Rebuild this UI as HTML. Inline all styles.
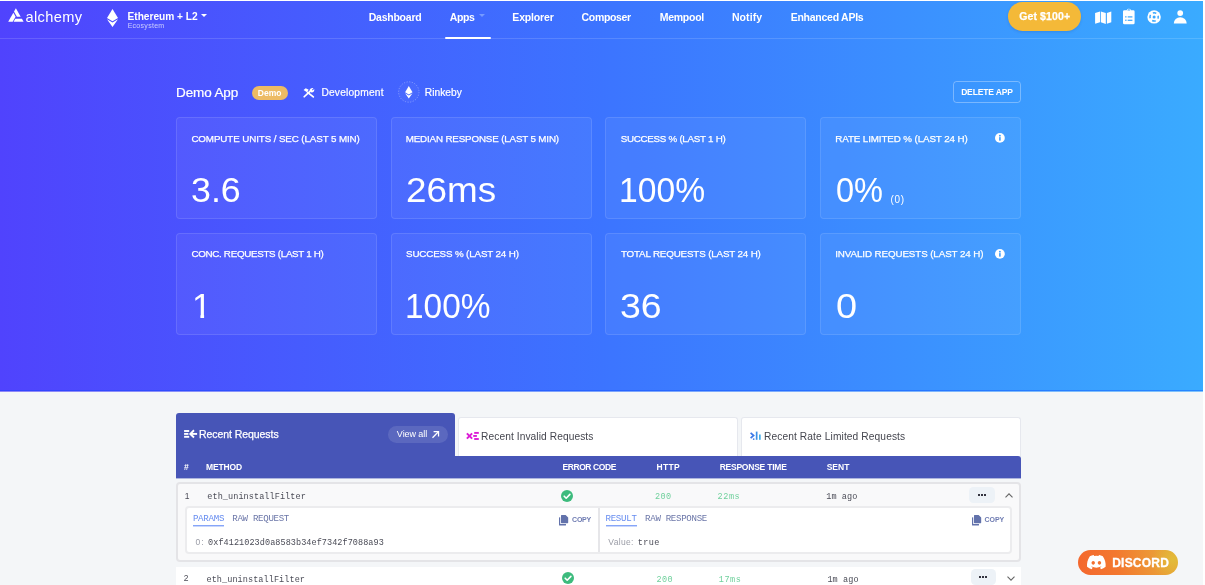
<!DOCTYPE html>
<html lang="en">
<head>
<meta charset="utf-8">
<title>Alchemy Dashboard - Demo App</title>
<style>
*{box-sizing:border-box}
html,body{margin:0;padding:0}
body{width:1205px;height:585px;overflow:hidden;background:#fff;font-family:"Liberation Sans",sans-serif;position:relative}
.page{position:absolute;left:0;top:1px;width:1203px;height:584px;background:#f4f6f8;overflow:hidden}
.hero{position:absolute;left:0;top:0;width:1203px;height:390px;background:linear-gradient(90deg,#5043fd 0%,#3c74ff 50%,#3aabff 100%);box-shadow:inset 0 -1px 0 rgba(0,70,255,.35)}
.hero2{position:absolute;left:0;top:390px;width:1203px;height:1px;opacity:.6;background:linear-gradient(90deg,#4a3cf8 0%,#2c6cff 50%,#30a0ff 100%)}
.hline{position:absolute;left:0;top:37px;width:1203px;height:1px;background:rgba(255,255,255,.14)}
.root{will-change:transform;position:absolute;left:0;top:0;width:1203px;height:585px;overflow:hidden}
.t{position:absolute;white-space:pre;display:block}
.abs{position:absolute}
.card{position:absolute;width:201px;height:102px;background:rgba(255,255,255,.05);border:1px solid rgba(255,255,255,.115);border-radius:4px}
svg{position:absolute;overflow:visible}
</style>
</head>
<body>
<div class="page"><div class="hero"></div><div class="hero2"></div><div class="hline"></div></div>
<div class="root">
<header>
<svg style="left:7.5px;top:8.3px" width="16" height="14" viewBox="0 0 16 14">
<path d="M7.9 0.3 L12.7 8.7 L8.9 8.7 L6.0 3.6 Z" fill="#fff"/>
<path d="M0.2 13.7 L5.33 4.76 L7.58 8.67 L4.7 13.7 Z" fill="#fff"/>
<path d="M7.3 10.7 L13.9 10.7 L15.6 13.7 L5.6 13.7 Z" fill="#fff"/>
</svg>
<span class="t" style="left:25.38px;top:6.70px;font-size:14.6px;line-height:20px;font-weight:400;color:#fff;font-family:'Liberation Sans', sans-serif;letter-spacing:0.384px;">alchemy</span>
<svg style="left:107px;top:8.5px" width="11" height="18" viewBox="0 0 11 18">
<path d="M5.5 0 L11 9 L5.5 12.2 L0 9 Z" fill="#fff"/>
<path d="M0 10.3 L5.5 13.6 L11 10.3 L5.5 18 Z" fill="#fff"/>
</svg>
<span class="t" style="left:127.52px;top:10.30px;font-size:10.2px;line-height:14px;font-weight:700;color:#fff;font-family:'Liberation Sans', sans-serif;letter-spacing:-0.034px;">Ethereum + L2</span>
<div class="abs" style="left:201.3px;top:13.9px;width:0;height:0;border-left:3.1px solid transparent;border-right:3.1px solid transparent;border-top:3.4px solid #fff"></div>
<span class="t" style="left:127.63px;top:20.50px;font-size:7px;line-height:10px;font-weight:400;color:rgba(255,255,255,.7);font-family:'Liberation Sans', sans-serif;letter-spacing:0.288px;">Ecosystem</span>
<nav>
<span class="t" style="left:368.70px;top:9.50px;font-size:10.5px;line-height:15px;font-weight:700;color:#fff;font-family:'Liberation Sans', sans-serif;letter-spacing:-0.231px;">Dashboard</span>
<span class="t" style="left:449.74px;top:9.50px;font-size:10.5px;line-height:15px;font-weight:700;color:#fff;font-family:'Liberation Sans', sans-serif;letter-spacing:-0.353px;">Apps</span>
<span class="t" style="left:512.30px;top:9.50px;font-size:10.5px;line-height:15px;font-weight:700;color:#fff;font-family:'Liberation Sans', sans-serif;letter-spacing:-0.164px;">Explorer</span>
<span class="t" style="left:581.57px;top:9.50px;font-size:10.5px;line-height:15px;font-weight:700;color:#fff;font-family:'Liberation Sans', sans-serif;letter-spacing:-0.335px;">Composer</span>
<span class="t" style="left:659.70px;top:9.50px;font-size:10.5px;line-height:15px;font-weight:700;color:#fff;font-family:'Liberation Sans', sans-serif;letter-spacing:-0.258px;">Mempool</span>
<span class="t" style="left:731.90px;top:9.50px;font-size:10.5px;line-height:15px;font-weight:700;color:#fff;font-family:'Liberation Sans', sans-serif;letter-spacing:0.082px;">Notify</span>
<span class="t" style="left:790.70px;top:9.50px;font-size:10.5px;line-height:15px;font-weight:700;color:#fff;font-family:'Liberation Sans', sans-serif;letter-spacing:-0.252px;">Enhanced APIs</span>
<div class="abs" style="left:478.5px;top:14.2px;width:0;height:0;border-left:3px solid transparent;border-right:3px solid transparent;border-top:3.4px solid rgba(140,175,255,.7)"></div>
<div class="abs" style="left:444.6px;top:36.6px;width:46px;height:2.2px;background:#fff;border-radius:1px"></div>
</nav>
<div class="abs" style="left:1008.2px;top:2px;width:72.6px;height:29px;border-radius:14.5px;background:#f4b938;box-shadow:0 1px 3px rgba(0,0,80,.12)"></div>
<span class="t" style="left:1019.27px;top:9.30px;font-size:10.5px;line-height:15px;font-weight:700;color:#fff;font-family:'Liberation Sans', sans-serif;letter-spacing:0.104px;-webkit-text-stroke:0.25px #fff;">Get $100+</span>
<svg style="left:1090px;top:4px" width="100" height="26" viewBox="1090 4 100 26">
<path d="M1095.1 13.1 L1100 11.5 L1100 22.3 L1095.1 23.8 Z" fill="#fff"/>
<path d="M1100.8 11.5 L1105.8 13.1 L1105.8 23.9 L1100.8 22.3 Z" fill="#fff"/>
<path d="M1106.9 13.1 L1111.3 11.5 L1111.3 22.3 L1106.9 23.8 Z" fill="#fff"/>
<path d="M1124.4 10.2 H1126.6 A2.3 2.1 0 0 1 1131 10.2 H1133.2 A1.4 1.4 0 0 1 1134.6 11.6 V22.9 A1.4 1.4 0 0 1 1133.2 24.3 H1124.4 A1.4 1.4 0 0 1 1123 22.9 V11.6 A1.4 1.4 0 0 1 1124.4 10.2 Z" fill="#fff"/>
<ellipse cx="1128.8" cy="9.9" rx="1.5" ry="0.7" fill="#3aa6ff"/>
<rect x="1125.2" y="16.2" width="1.3" height="1.3" fill="#3aa6ff"/><rect x="1127.7" y="16.3" width="4.7" height="1.2" fill="#3aa6ff"/>
<rect x="1125.2" y="19.6" width="1.3" height="1.3" fill="#3aa6ff"/><rect x="1127.7" y="19.7" width="4.7" height="1.2" fill="#3aa6ff"/>
<circle cx="1154.1" cy="16.9" r="6.7" fill="#fff"/>
<circle cx="1154.1" cy="16.9" r="1.5" fill="#3aa8ff"/>
<circle cx="1154.1" cy="16.9" r="4.1" fill="none" stroke="#3aa8ff" stroke-width="1.5" stroke-dasharray="3.6 2.84" stroke-dashoffset="1.8"/>
<circle cx="1180.2" cy="13.1" r="2.9" fill="#fff"/>
<path d="M1173.8 23.5 A6.45 6.3 0 0 1 1186.7 23.5 Z" fill="#fff"/>
</svg>
</header>
<main>
<section class="app-title">
<span class="t" style="left:176.09px;top:83.70px;font-size:13.5px;line-height:18px;font-weight:400;color:#fff;font-family:'Liberation Sans', sans-serif;letter-spacing:-0.139px;-webkit-text-stroke:0.2px #fff;">Demo App</span>
<div class="abs" style="left:252px;top:85.5px;width:35.5px;height:14.2px;border-radius:7.1px;background:#edbb64"></div>
<span class="t" style="left:257.73px;top:86.60px;font-size:8.5px;line-height:12px;font-weight:700;color:#fff;font-family:'Liberation Sans', sans-serif;letter-spacing:0.059px;">Demo</span>
<svg style="left:303.1px;top:87.5px" width="11.5" height="9.9" viewBox="0 0 12.5 11.5" preserveAspectRatio="none">
<g stroke="#fff" stroke-linecap="round" fill="none">
<path d="M1.3 10.2 L7.6 3.9" stroke-width="1.9"/>
<path d="M5 5 L11.2 10.3" stroke-width="1.9"/>
</g>
<path d="M0.6 2.2 L3 0.2 L6.2 1.9 L4.3 4.9 Z" fill="#fff"/>
<path d="M7.2 3.3 A2.9 2.9 0 0 1 11.4 0.4 L9.7 2.1 L10.4 2.9 L12.2 1.3 A2.9 2.9 0 0 1 8.6 5 Z" fill="#fff"/>
</svg>
<span class="t" style="left:321.46px;top:85.60px;font-size:10.2px;line-height:14px;font-weight:400;color:#fff;font-family:'Liberation Sans', sans-serif;letter-spacing:0.198px;-webkit-text-stroke:0.2px #fff;">Development</span>
<svg style="left:397px;top:80px" width="24" height="24" viewBox="397 80 24 24">
<circle cx="408.8" cy="92" r="10.2" fill="rgba(255,255,255,.03)" stroke="rgba(255,255,255,.42)" stroke-width="0.7" stroke-dasharray="1.3 1.37"/>
<path d="M408.8 86.1 L412.5 92.2 L408.8 94.4 L405.1 92.2 Z" fill="#fff"/>
<path d="M405.1 93.2 L408.8 95.4 L412.5 93.2 L408.8 98.4 Z" fill="#fff"/>
</svg>
<span class="t" style="left:424.76px;top:85.60px;font-size:10.2px;line-height:14px;font-weight:400;color:#fff;font-family:'Liberation Sans', sans-serif;letter-spacing:0.041px;-webkit-text-stroke:0.2px #fff;">Rinkeby</span>
<div class="abs" style="left:953px;top:81.3px;width:68px;height:21.5px;border:1px solid rgba(255,255,255,.32);border-radius:3.5px"></div>
<span class="t" style="left:961.13px;top:86.30px;font-size:8.5px;line-height:12px;font-weight:700;color:#fff;font-family:'Liberation Sans', sans-serif;letter-spacing:-0.145px;">DELETE APP</span>
</section>
<section class="stats">
<div class="card" style="left:176px;top:117px"></div>
<div class="card" style="left:391px;top:117px"></div>
<div class="card" style="left:605.3px;top:117px"></div>
<div class="card" style="left:820px;top:117px"></div>
<div class="card" style="left:176px;top:233.3px"></div>
<div class="card" style="left:391px;top:233.3px"></div>
<div class="card" style="left:605.3px;top:233.3px"></div>
<div class="card" style="left:820px;top:233.3px"></div>
<span class="t" style="left:191.40px;top:132.30px;font-size:9.8px;line-height:14px;font-weight:400;color:#fff;font-family:'Liberation Sans', sans-serif;letter-spacing:-0.110px;-webkit-text-stroke:0.25px #fff;">COMPUTE UNITS / SEC (LAST 5 MIN)</span>
<span class="t" style="left:405.70px;top:132.30px;font-size:9.8px;line-height:14px;font-weight:400;color:#fff;font-family:'Liberation Sans', sans-serif;letter-spacing:-0.159px;-webkit-text-stroke:0.25px #fff;">MEDIAN RESPONSE (LAST 5 MIN)</span>
<span class="t" style="left:620.65px;top:132.30px;font-size:9.8px;line-height:14px;font-weight:400;color:#fff;font-family:'Liberation Sans', sans-serif;letter-spacing:-0.278px;-webkit-text-stroke:0.25px #fff;">SUCCESS % (LAST 1 H)</span>
<span class="t" style="left:835.30px;top:132.30px;font-size:9.8px;line-height:14px;font-weight:400;color:#fff;font-family:'Liberation Sans', sans-serif;letter-spacing:-0.112px;-webkit-text-stroke:0.25px #fff;">RATE LIMITED % (LAST 24 H)</span>
<span class="t" style="left:191.40px;top:247.30px;font-size:9.8px;line-height:14px;font-weight:400;color:#fff;font-family:'Liberation Sans', sans-serif;letter-spacing:-0.301px;-webkit-text-stroke:0.25px #fff;">CONC. REQUESTS (LAST 1 H)</span>
<span class="t" style="left:406.05px;top:247.30px;font-size:9.8px;line-height:14px;font-weight:400;color:#fff;font-family:'Liberation Sans', sans-serif;letter-spacing:-0.147px;-webkit-text-stroke:0.25px #fff;">SUCCESS % (LAST 24 H)</span>
<span class="t" style="left:620.88px;top:247.30px;font-size:9.8px;line-height:14px;font-weight:400;color:#fff;font-family:'Liberation Sans', sans-serif;letter-spacing:-0.159px;-webkit-text-stroke:0.25px #fff;">TOTAL REQUESTS (LAST 24 H)</span>
<span class="t" style="left:835.20px;top:247.30px;font-size:9.8px;line-height:14px;font-weight:400;color:#fff;font-family:'Liberation Sans', sans-serif;letter-spacing:-0.100px;-webkit-text-stroke:0.25px #fff;">INVALID REQUESTS (LAST 24 H)</span>
<span class="t" style="left:191.34px;top:168.10px;font-size:35px;line-height:44px;font-weight:400;color:#fff;font-family:'Liberation Sans', sans-serif;letter-spacing:0.000px;transform-origin:0 50%;transform:scaleX(1.0222);">3.6</span>
<span class="t" style="left:405.55px;top:168.10px;font-size:35px;line-height:44px;font-weight:400;color:#fff;font-family:'Liberation Sans', sans-serif;letter-spacing:0.000px;transform-origin:0 50%;transform:scaleX(1.0525);">26ms</span>
<span class="t" style="left:619.34px;top:168.10px;font-size:35px;line-height:44px;font-weight:400;color:#fff;font-family:'Liberation Sans', sans-serif;letter-spacing:0.000px;transform-origin:0 50%;transform:scaleX(0.9613);">100%</span>
<span class="t" style="left:836.13px;top:168.10px;font-size:35px;line-height:44px;font-weight:400;color:#fff;font-family:'Liberation Sans', sans-serif;letter-spacing:0.000px;transform-origin:0 50%;transform:scaleX(0.9296);">0%</span>
<span class="t" style="left:404.85px;top:283.90px;font-size:35px;line-height:44px;font-weight:400;color:#fff;font-family:'Liberation Sans', sans-serif;letter-spacing:0.000px;transform-origin:0 50%;transform:scaleX(0.9554);">100%</span>
<span class="t" style="left:620.47px;top:283.90px;font-size:35px;line-height:44px;font-weight:400;color:#fff;font-family:'Liberation Sans', sans-serif;letter-spacing:0.000px;transform-origin:0 50%;transform:scaleX(1.0702);">36</span>
<span class="t" style="left:835.92px;top:283.90px;font-size:35px;line-height:44px;font-weight:400;color:#fff;font-family:'Liberation Sans', sans-serif;letter-spacing:0.000px;transform-origin:0 50%;transform:scaleX(1.0816);">0</span>
<span class="t" style="left:890.38px;top:192.60px;font-size:10px;line-height:14px;font-weight:400;color:#fff;font-family:'Liberation Sans', sans-serif;letter-spacing:0.703px;">(0)</span>
<span class="t" style="left:191.9px;top:284.1px;font-size:35px;line-height:44px;color:#fff;clip-path:polygon(0 0,100% 0,100% 30.9px,12.2px 30.9px,12.2px 100%,8.5px 100%,8.5px 30.9px,0 30.9px)">1</span>
<svg style="left:995.1px;top:133.1px" width="9.8" height="9.8" viewBox="0 0 10 10"><circle cx="5" cy="5" r="5" fill="#fff"/><rect x="4.2" y="4.2" width="1.6" height="3.6" fill="#3a9cff"/><circle cx="5" cy="2.7" r="0.95" fill="#3a9cff"/></svg>
<svg style="left:995.1px;top:248.5px" width="9.8" height="9.8" viewBox="0 0 10 10"><circle cx="5" cy="5" r="5" fill="#fff"/><rect x="4.2" y="4.2" width="1.6" height="3.6" fill="#3a9cff"/><circle cx="5" cy="2.7" r="0.95" fill="#3a9cff"/></svg>
</section>
<section class="requests">
<div class="abs" style="left:176px;top:413px;width:278.5px;height:44px;background:#4755b7;border-radius:3px 3px 0 0"></div>
<div class="abs" style="left:457.5px;top:416.7px;width:280px;height:40px;background:#fff;border:1px solid #e6e8ee;border-bottom:none;border-radius:3px 3px 0 0"></div>
<div class="abs" style="left:740.7px;top:416.7px;width:280px;height:40px;background:#fff;border:1px solid #e6e8ee;border-bottom:none;border-radius:3px 3px 0 0"></div>
<div class="abs" style="left:176px;top:456px;width:845px;height:22px;background:#4755b7;border-radius:0 3px 0 0;box-shadow:0 1px 0 rgba(71,85,183,.4)"></div>
<svg style="left:180px;top:424px" width="30" height="20" viewBox="180 424 30 20">
<g stroke="#fff" stroke-width="1.9" fill="none"><path d="M184.1 431 H189.2"/><path d="M184.1 433.9 H188.4"/><path d="M184.1 436.8 H189.2"/>
<path d="M190.6 433.9 H197.1"/><path d="M194 430.3 L190.3 433.9 L194 437.5"/></g></svg>
<span class="t" style="left:198.94px;top:426.90px;font-size:10.5px;line-height:15px;font-weight:400;color:#fff;font-family:'Liberation Sans', sans-serif;letter-spacing:-0.058px;-webkit-text-stroke:0.25px #fff;">Recent Requests</span>
<div class="abs" style="left:388.4px;top:425.6px;width:59.2px;height:17px;border-radius:8.5px;background:rgba(255,255,255,.115)"></div>
<span class="t" style="left:396.86px;top:427.60px;font-size:9px;line-height:13px;font-weight:400;color:#fff;font-family:'Liberation Sans', sans-serif;letter-spacing:-0.074px;">View all</span>
<svg style="left:431.9px;top:430.7px" width="7.2" height="7.2" viewBox="0 0 7.2 7.2"><g stroke="#fff" stroke-width="1.25" fill="none"><path d="M0.5 6.7 L6.2 1"/><path d="M1.6 0.65 H6.55 V5.6"/></g></svg>
<svg style="left:460px;top:426px" width="30" height="20" viewBox="460 426 30 20">
<g stroke="#dc1bd6" stroke-width="1.9" fill="none"><path d="M466.9 433.3 L472.1 438.7"/><path d="M472.1 433.3 L466.9 438.7"/>
<path d="M474.2 432.9 H478.8"/><path d="M473.2 435.95 H476.9"/><path d="M474.2 439 H478.8"/></g></svg>
<span class="t" style="left:481.06px;top:430.20px;font-size:10.2px;line-height:14px;font-weight:400;color:#45464f;font-family:'Liberation Sans', sans-serif;letter-spacing:0.085px;">Recent Invalid Requests</span>
<svg style="left:744px;top:426px" width="30" height="20" viewBox="744 426 30 20">
<path d="M750.6 432.9 L753.6 435.5 L750.6 438.1" stroke="#3b78e8" stroke-width="1.7" fill="none"/>
<rect x="752.9" y="438.4" width="1.5" height="1.5" fill="#3b78e8"/>
<rect x="755.8" y="431.6" width="1.7" height="8.2" fill="#3d8fe6"/>
<rect x="759" y="434.5" width="1.7" height="5.3" fill="#42ade8"/></svg>
<span class="t" style="left:763.96px;top:430.20px;font-size:10.2px;line-height:14px;font-weight:400;color:#45464f;font-family:'Liberation Sans', sans-serif;letter-spacing:0.112px;">Recent Rate Limited Requests</span>
<span class="t" style="left:184.05px;top:461.20px;font-size:8.5px;line-height:12px;font-weight:700;color:#fff;font-family:'Liberation Sans', sans-serif;letter-spacing:0.000px;">#</span>
<span class="t" style="left:206.03px;top:461.20px;font-size:8.5px;line-height:12px;font-weight:700;color:#fff;font-family:'Liberation Sans', sans-serif;letter-spacing:-0.164px;">METHOD</span>
<span class="t" style="left:562.43px;top:461.20px;font-size:8.5px;line-height:12px;font-weight:700;color:#fff;font-family:'Liberation Sans', sans-serif;letter-spacing:-0.414px;">ERROR CODE</span>
<span class="t" style="left:656.43px;top:461.20px;font-size:8.5px;line-height:12px;font-weight:700;color:#fff;font-family:'Liberation Sans', sans-serif;letter-spacing:0.352px;">HTTP</span>
<span class="t" style="left:719.63px;top:461.20px;font-size:8.5px;line-height:12px;font-weight:700;color:#fff;font-family:'Liberation Sans', sans-serif;letter-spacing:-0.225px;">RESPONSE TIME</span>
<span class="t" style="left:826.66px;top:461.20px;font-size:8.5px;line-height:12px;font-weight:700;color:#fff;font-family:'Liberation Sans', sans-serif;letter-spacing:0.021px;">SENT</span>
<div class="abs" style="left:176px;top:482px;width:845px;height:80px;background:#f9f9fa;border:2px solid #e4e4e7;border-radius:4px"></div>
<span class="t" style="left:184.75px;top:489.50px;font-size:8.5px;line-height:12px;font-weight:400;color:#4b4c57;font-family:'Liberation Sans', sans-serif;letter-spacing:0.000px;">1</span>
<span class="t" style="left:207.25px;top:490.80px;font-size:8.5px;line-height:12px;font-weight:400;color:#4b4c57;font-family:'Liberation Mono', monospace;letter-spacing:0.089px;">eth_uninstallFilter</span>
<svg style="left:561px;top:489.6px" width="12" height="12" viewBox="0 0 12 12"><circle cx="6" cy="6" r="6" fill="#3dbb7d"/><path d="M3.2 6.2 L5.2 8.2 L8.9 4.4" stroke="#fff" stroke-width="1.6" fill="none" stroke-linecap="round" stroke-linejoin="round"/></svg>
<span class="t" style="left:654.90px;top:490.80px;font-size:8.5px;line-height:12px;font-weight:400;color:#6fd09c;font-family:'Liberation Mono', monospace;letter-spacing:0.504px;">200</span>
<span class="t" style="left:717.60px;top:490.80px;font-size:8.5px;line-height:12px;font-weight:400;color:#6fd09c;font-family:'Liberation Mono', monospace;letter-spacing:0.564px;">22ms</span>
<span class="t" style="left:826.29px;top:490.80px;font-size:8.5px;line-height:12px;font-weight:400;color:#4b4c57;font-family:'Liberation Mono', monospace;letter-spacing:0.091px;">1m ago</span>
<div class="abs" style="left:969.3px;top:486.8px;width:25.4px;height:16.3px;border-radius:4.5px;background:#edf2f7"></div>
<div class="abs" style="left:977.6px;top:494px;width:2.1px;height:2.1px;background:#33333f;box-shadow:3px 0 0 #33333f,6px 0 0 #33333f"></div>
<svg style="left:1005.4px;top:492.5px" width="8" height="5" viewBox="0 0 8 5"><path d="M0.5 4.4 L4 0.9 L7.5 4.4" stroke="#666" stroke-width="1.1" fill="none"/></svg>
<div class="abs" style="left:185px;top:506px;width:827px;height:48px;background:#fff;border:2px solid #ececee;border-radius:4px"></div>
<div class="abs" style="left:598.3px;top:508px;width:1.5px;height:44px;background:#e6e6e9"></div>
<span class="t" style="left:192.88px;top:512.10px;font-size:9.1px;line-height:13px;font-weight:400;color:#668cf0;font-family:'Liberation Mono', monospace;letter-spacing:-0.236px;">PARAMS</span>
<div class="abs" style="left:193.3px;top:525.4px;width:30.8px;height:2px;background:linear-gradient(180deg,#86a5f8 0,#86a5f8 50%,rgba(134,165,248,.45) 50%)"></div>
<span class="t" style="left:232.28px;top:512.10px;font-size:9.1px;line-height:13px;font-weight:400;color:#6b76a8;font-family:'Liberation Mono', monospace;letter-spacing:-0.297px;">RAW REQUEST</span>
<span class="t" style="left:195.47px;top:535.60px;font-size:8.5px;line-height:12px;font-weight:400;color:#9a9ca6;font-family:'Liberation Sans', sans-serif;letter-spacing:1.114px;">0:</span>
<span class="t" style="left:208.09px;top:536.90px;font-size:8.5px;line-height:12px;font-weight:400;color:#4b4c57;font-family:'Liberation Mono', monospace;letter-spacing:0.070px;">0xf4121023d0a8583b34ef7342f7088a93</span>
<svg style="left:559.4px;top:514.5px" width="9.2" height="10.5" viewBox="0 0 9.2 10.5"><path d="M2.6 0 H6.6 L9.2 2.6 V7.6 A0.6 0.6 0 0 1 8.6 8.2 H2.6 A0.6 0.6 0 0 1 2 7.6 V0.6 A0.6 0.6 0 0 1 2.6 0 Z" fill="#6272ab"/><path d="M1.2 2.2 V8.6 A0.5 0.5 0 0 0 1.7 9.1 H7 V9.9 A0.6 0.6 0 0 1 6.4 10.5 H0.6 A0.6 0.6 0 0 1 0 9.9 V2.8 A0.6 0.6 0 0 1 0.6 2.2 Z" fill="#6272ab"/></svg>
<span class="t" style="left:572.11px;top:514.90px;font-size:7px;line-height:10px;font-weight:700;color:#6f7cb2;font-family:'Liberation Sans', sans-serif;letter-spacing:-0.281px;">COPY</span>
<span class="t" style="left:605.48px;top:512.10px;font-size:9.1px;line-height:13px;font-weight:400;color:#668cf0;font-family:'Liberation Mono', monospace;letter-spacing:-0.258px;">RESULT</span>
<div class="abs" style="left:606px;top:525.4px;width:30.8px;height:2px;background:linear-gradient(180deg,#86a5f8 0,#86a5f8 50%,rgba(134,165,248,.45) 50%)"></div>
<span class="t" style="left:645.08px;top:512.10px;font-size:9.1px;line-height:13px;font-weight:400;color:#6b76a8;font-family:'Liberation Mono', monospace;letter-spacing:-0.300px;">RAW RESPONSE</span>
<span class="t" style="left:608.26px;top:535.60px;font-size:8.5px;line-height:12px;font-weight:400;color:#9a9ca6;font-family:'Liberation Sans', sans-serif;letter-spacing:0.346px;">Value:</span>
<span class="t" style="left:637.71px;top:536.90px;font-size:8.5px;line-height:12px;font-weight:400;color:#4b4c57;font-family:'Liberation Mono', monospace;letter-spacing:0.381px;">true</span>
<svg style="left:972.3px;top:514.8px" width="9.2" height="10.5" viewBox="0 0 9.2 10.5"><path d="M2.6 0 H6.6 L9.2 2.6 V7.6 A0.6 0.6 0 0 1 8.6 8.2 H2.6 A0.6 0.6 0 0 1 2 7.6 V0.6 A0.6 0.6 0 0 1 2.6 0 Z" fill="#6272ab"/><path d="M1.2 2.2 V8.6 A0.5 0.5 0 0 0 1.7 9.1 H7 V9.9 A0.6 0.6 0 0 1 6.4 10.5 H0.6 A0.6 0.6 0 0 1 0 9.9 V2.8 A0.6 0.6 0 0 1 0.6 2.2 Z" fill="#6272ab"/></svg>
<span class="t" style="left:984.41px;top:515.20px;font-size:7px;line-height:10px;font-weight:700;color:#6f7cb2;font-family:'Liberation Sans', sans-serif;letter-spacing:-0.015px;">COPY</span>
<div class="abs" style="left:176px;top:566.6px;width:845px;height:30px;background:#fff"></div>
<span class="t" style="left:183.77px;top:572.40px;font-size:8.5px;line-height:12px;font-weight:400;color:#4b4c57;font-family:'Liberation Sans', sans-serif;letter-spacing:0.000px;">2</span>
<span class="t" style="left:206.45px;top:573.70px;font-size:8.5px;line-height:12px;font-weight:400;color:#4b4c57;font-family:'Liberation Mono', monospace;letter-spacing:0.089px;">eth_uninstallFilter</span>
<svg style="left:561.5px;top:572.4px" width="12" height="12" viewBox="0 0 12 12"><circle cx="6" cy="6" r="6" fill="#3dbb7d"/><path d="M3.2 6.2 L5.2 8.2 L8.9 4.4" stroke="#fff" stroke-width="1.6" fill="none" stroke-linecap="round" stroke-linejoin="round"/></svg>
<span class="t" style="left:656.40px;top:573.70px;font-size:8.5px;line-height:12px;font-weight:400;color:#6fd09c;font-family:'Liberation Mono', monospace;letter-spacing:0.504px;">200</span>
<span class="t" style="left:718.79px;top:573.70px;font-size:8.5px;line-height:12px;font-weight:400;color:#6fd09c;font-family:'Liberation Mono', monospace;letter-spacing:0.570px;">17ms</span>
<span class="t" style="left:827.39px;top:573.70px;font-size:8.5px;line-height:12px;font-weight:400;color:#4b4c57;font-family:'Liberation Mono', monospace;letter-spacing:0.111px;">1m ago</span>
<div class="abs" style="left:970.8px;top:569.2px;width:25.4px;height:16.3px;border-radius:4.5px;background:#edf2f7"></div>
<div class="abs" style="left:979.1px;top:576.4px;width:2.1px;height:2.1px;background:#33333f;box-shadow:3px 0 0 #33333f,6px 0 0 #33333f"></div>
<svg style="left:1006.8px;top:575.5px" width="8" height="5" viewBox="0 0 8 5"><path d="M0.5 0.6 L4 4.1 L7.5 0.6" stroke="#666" stroke-width="1.1" fill="none"/></svg>
</section>
</main>
<aside class="discord">
<div class="abs" style="left:1078px;top:550.2px;width:100px;height:24.8px;border-radius:12.4px;background:radial-gradient(circle at 95% 38%,#e2bc3a 0%,rgba(226,188,58,0) 22%),linear-gradient(78deg,#f4672e 0%,#f3782f 40%,#ec9836 75%,#e7a535 100%)"></div>
<svg style="left:1086.8px;top:555.3px" width="18.7" height="14.5" viewBox="0 0 24 18.6">
<path d="M20.3 1.6 A19.8 19.8 0 0 0 15.4 0 C15.2 0.4 14.9 0.9 14.8 1.3 A18.3 18.3 0 0 0 9.2 1.3 C9.1 0.9 8.8 0.4 8.6 0 A19.7 19.7 0 0 0 3.7 1.6 C0.6 6.2 -0.3 10.8 0.1 15.2 A19.9 19.9 0 0 0 6.1 18.3 C6.6 17.6 7 16.9 7.4 16.2 A12.9 12.9 0 0 1 5.4 15.2 C5.6 15.1 5.7 15 5.9 14.8 A14.2 14.2 0 0 0 18.1 14.8 C18.3 15 18.4 15.1 18.6 15.2 A12.9 12.9 0 0 1 16.6 16.2 C17 16.9 17.4 17.6 17.9 18.3 A19.8 19.8 0 0 0 23.9 15.2 C24.4 10.1 23.1 5.6 20.3 1.6 Z M8 12.4 C6.8 12.4 5.8 11.3 5.8 10 C5.8 8.7 6.8 7.6 8 7.6 C9.2 7.6 10.2 8.7 10.2 10 C10.2 11.3 9.2 12.4 8 12.4 Z M16 12.4 C14.8 12.4 13.8 11.3 13.8 10 C13.8 8.7 14.8 7.6 16 7.6 C17.2 7.6 18.2 8.7 18.2 10 C18.2 11.3 17.2 12.4 16 12.4 Z" fill="#fff" fill-rule="evenodd"/></svg>
<span class="t" style="left:1112.20px;top:554.60px;font-size:12px;line-height:16px;font-weight:700;color:#fff;font-family:'Liberation Sans', sans-serif;letter-spacing:0.227px;-webkit-text-stroke:0.3px #fff;">DISCORD</span>
</aside>
</div>
</body>
</html>
